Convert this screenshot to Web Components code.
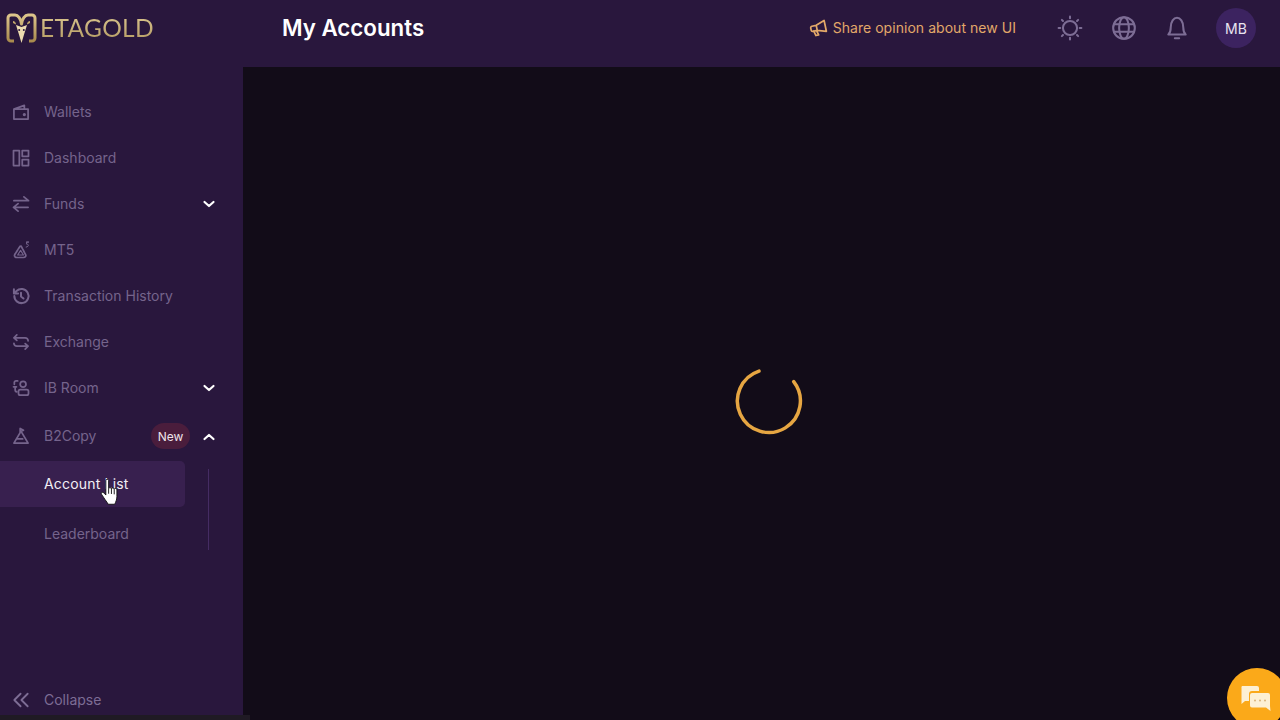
<!DOCTYPE html>
<html lang="en">
<head>
<meta charset="utf-8">
<title>My Accounts</title>
<style>
html, body { margin: 0; height: 100%; background: #120c18; overflow: hidden; }
body { font-family: "Inter", "Noto Sans", sans-serif; }
</style>
</head>
<body>
<app-shell>
	<top-bar slot="top" heading="My Accounts"></top-bar>
	<side-nav slot="side">
		<nav-item icon="wallet">Wallets</nav-item>
		<nav-item icon="dashboard">Dashboard</nav-item>
		<nav-item icon="funds" chevron="down">Funds</nav-item>
		<nav-item icon="mt5">MT5</nav-item>
		<nav-item icon="history">Transaction History</nav-item>
		<nav-item icon="exchange">Exchange</nav-item>
		<nav-item icon="ib" chevron="down">IB Room</nav-item>
		<nav-item icon="copy" chevron="up" badge="New" tall>B2Copy</nav-item>
		<sub-nav>
			<sub-item active>Account List</sub-item>
			<sub-item>Leaderboard</sub-item>
		</sub-nav>
	</side-nav>
	<spin-loader></spin-loader>
</app-shell>
<chat-bubble></chat-bubble>
<hand-cursor></hand-cursor>
<bottom-strip></bottom-strip>

<script>
// stroke icons, all drawn on a 24 box
const ICONS = {
	wallet: '<path d="M3.500 8.500 16 4v4.500M3.500 8.500h17v12h-17z"/><circle cx="16" cy="15" r=".9" fill="currentColor"/>',
	dashboard: '<rect x="3" y="3" width="7" height="18"/><rect x="13.500" y="3" width="7.500" height="7"/><rect x="13.500" y="14" width="7.500" height="7"/>',
	funds: '<path d="M21 8H3.500M15.500 3.500 21 8M3 16h17.500M8.500 11.500 3 16l5.500 4.500"/>',
	mt5: '<path d="M10.500 8 4.500 17.500c-1 2 .5 3.500 2.500 3.500h8c2 0 3.500-1.500 2.500-3.500L12.500 8c-.5-1-1.500-1-2 0z" stroke-dasharray="3.500 1.200"/><path d="M11.500 12.500 8 18h7z" stroke-width="1.400"/><path d="M18.500 2.500h3l-2.800 0v2.500c2.500-.5 3.500 3-.5 3.500" stroke-width="1.200"/>',
	history: '<path d="M4 12a8.500 8.500 0 1 0 2.600-6.100L3.500 9M3.500 4v5h5M12 8v4.500l3 2.500" stroke-width="2.400"/>',
	exchange: '<path d="M7 3.500 3.500 7 7 10M4 7h13a3.500 3.500 0 0 1 3.500 3.500M17 20.500l3.500-3.500-3.500-3M20 17H7a3.500 3.500 0 0 1-3.500-3.500"/>',
	ib: '<circle cx="14.500" cy="7.500" r="3.500"/><rect x="9" y="14" width="12" height="6.500" rx="2"/><path d="M8 3.500H6a2 2 0 0 0-2 2v2M3 10.500h3.500M5 10.500v4a2 2 0 0 0 2 2"/>',
	copy: '<path d="M11 3v5l-7.500 12.500h17L13 8M11 3l4 2-4 2M8 15.500h6"/>',
	chev2: '<path d="M11.500 4.500 4 12l7.500 7.500M20 4.500 12.500 12l7.500 7.500"/>',
	horn: '<g transform="rotate(-12 12 12)"><path d="M21 3.500v14L10 14H4.500a2 2 0 0 1-2-2V9.500a2 2 0 0 1 2-2H10zM10 7.500V14M5.500 14l1.500 6h3.500L9 14" stroke-width="2.200"/></g>',
	sun: '<circle cx="12" cy="12" r="6.500"/><path d="M12 1.500v1.500M12 21v1.500M1.500 12H3M21 12h1.500M4.500 4.500l1 1M18.500 18.500l1 1M4.500 19.500l1-1M18.500 5.500l1-1"/>',
	globe: '<circle cx="12" cy="12" r="10"/><ellipse cx="12" cy="12" rx="4.500" ry="10"/><path d="M2.800 8.500h18.400M2.800 15.500h18.400"/>',
	bell: '<path d="M4 18c1.700-1.500 2.200-3 2.200-6.500C6.200 6 9 2.500 12 2.500s5.800 3.500 5.800 9c0 3.500.5 5 2.200 6.500zM10 21.500h4"/>'
};

const icon = (name, size, sw = 1.9) => `<svg width="${size}" height="${size}" viewBox="0 0 24 24" fill="none" stroke="currentColor" stroke-width="${sw}" stroke-linecap="round" stroke-linejoin="round">${ICONS[name]}</svg>`;

class AppShell extends HTMLElement {
	constructor() {
		super();
		this.attachShadow({ mode: 'open' }).innerHTML = `
		<style>
			:host { display: grid; grid-template-rows: 67px 1fr; height: 720px; background: #120c18; }
			.body { display: grid; grid-template-columns: 243px 1fr; min-height: 0; }
			main { display: flex; align-items: center; justify-content: center; padding: 15px 0 0 15px; }
		</style>
		<slot name="top"></slot>
		<div class="body">
			<slot name="side"></slot>
			<main><slot></slot></main>
		</div>`;
	}
}

class TopBar extends HTMLElement {
	constructor() {
		super();
		this.attachShadow({ mode: 'open' }).innerHTML = `
		<style>
			:host { display: flex; align-items: center; background: #29173d; height: 67px; padding: 0 24px 11px 0; box-sizing: border-box; }
			.logo { width: 282px; padding-left: 6px; box-sizing: border-box; display: flex; align-items: center; gap: 3px; }
			.logo svg { display: block; }
			.word { font: 400 24.500px/30px "Lato", sans-serif; letter-spacing: 0.300px;
				background: linear-gradient(180deg, #dcc791, #b39a62); -webkit-background-clip: text; background-clip: text; color: transparent; }
			h1 { margin: 0; flex: 1; font: 600 22.300px/28px "Inter", sans-serif; color: #fff; }
			.share { display: flex; align-items: center; gap: 5px; color: #e2a869; font-size: 14px; letter-spacing: 0.040px; }
			.share span { padding-bottom: 2px; }
			.share svg { display: block; }
			.tools { display: flex; align-items: center; margin-left: 41px; color: #7d6d95; gap: 27.500px; }
			.tools svg { display: block; }
			.avatar { width: 40px; height: 40px; border-radius: 50%; background: #3c2360; color: #e9e4f0; display: flex; align-items: center; justify-content: center; font-size: 14px; margin-left: -1.500px; }
		</style>
		<div class="logo">
			<svg width="31" height="30" viewBox="0 0 31 30" fill="none">
				<defs><linearGradient id="g" x1="0" y1="0" x2="0" y2="1"><stop offset="0" stop-color="#dcc58b"/><stop offset="1" stop-color="#a98b4e"/></linearGradient></defs>
				<path stroke="url(#g)" stroke-width="3" stroke-linejoin="round" d="M8 28H5a3 3 0 0 1-3-3V5a3 3 0 0 1 3-3h4c3 0 6 4 6.500 9 .5-5 3.500-9 6.500-9h4a3 3 0 0 1 3 3v20a3 3 0 0 1-3 3h-3"/>
				<path fill="#c3a76b" d="M7 8c1.500 0 3 1.500 3 3.500L7 10zM24 8c-1.500 0-3 1.500-3 3.500l3-1.500z"/>
				<path fill="#ecdcb0" d="M10 12l5.500 2 5.500-2-2.500 8-3 10-3-10z"/>
				<circle cx="13.200" cy="17" r="1" fill="#29173d"/><circle cx="17.800" cy="17" r="1" fill="#29173d"/>
			</svg>
			<span class="word">ETAGOLD</span>
		</div>
		<h1>${this.getAttribute('heading')}</h1>
		<div class="share">${icon('horn', 19)}<span>Share opinion about new UI</span></div>
		<div class="tools">
			${icon('sun', 26)}${icon('globe', 26)}${icon('bell', 26)}
			<div class="avatar">MB</div>
		</div>`;
	}
}

class SideNav extends HTMLElement {
	constructor() {
		super();
		this.attachShadow({ mode: 'open' }).innerHTML = `
		<style>
			:host { display: flex; flex-direction: column; background: #29173d; padding-top: 22px; box-sizing: border-box; height: 653px; }
			.list { flex: 1; }
			.collapse { display: flex; align-items: center; gap: 13px; height: 40px; padding-left: 11px; color: #7d6d95; font-size: 14px; }
			.collapse span { padding-bottom: 2px; }
			.foot { height: 40px; }
		</style>
		<div class="list"><slot></slot></div>
		<div class="foot"><div class="collapse">${icon('chev2', 20, 2.2)}<span>Collapse</span></div></div>`;
	}
}

class NavItem extends HTMLElement {
	constructor() {
		super();
		const chev = this.getAttribute('chevron');
		const badge = this.getAttribute('badge');
		const d = chev === 'up' ? 'M2.500 8 7 4l4.500 4' : 'M2.500 4 7 8l4.500-4';
		this.attachShadow({ mode: 'open' }).innerHTML = `
		<style>
			:host { display: flex; align-items: center; height: 46px; padding-left: 11px; padding-right: 27px; color: #75648c; font-size: 14px; box-sizing: border-box; }
			:host([tall]) { height: 50px; }
			.ic { width: 20px; height: 20px; margin-right: 13px; display: flex; }
			.label { flex: 1; padding-bottom: 2px; }
			.badge { width: 39px; height: 26px; border-radius: 13px; background: #4a1d3c; color: #efe4ea; font-size: 12px; display: flex; align-items: center; justify-content: center; margin-right: 12px; }
			.chev { display: block; }
			:host([tall]) .chev { margin-top: 1px; }
		</style>
		<span class="ic">${icon(this.getAttribute('icon'), 20, 2.1)}</span>
		<span class="label"><slot></slot></span>
		${badge ? `<span class="badge">${badge}</span>` : ''}
		${chev ? `<svg class="chev" width="14" height="12" viewBox="0 0 14 12" fill="none" stroke="#fff" stroke-width="2.200" stroke-linecap="round" stroke-linejoin="round"><path d="${d}"/></svg>` : ''}`;
	}
}

class SubNav extends HTMLElement {
	constructor() {
		super();
		this.attachShadow({ mode: 'open' }).innerHTML = `
		<style>
			:host { display: grid; grid-template-columns: 185px 1fr; }
			.items { display: flex; flex-direction: column; gap: 4px; }
			.rail { width: 1px; height: 81px; margin: 8px 0 0 23px; background: #452c63; }
		</style>
		<div class="items"><slot></slot></div>
		<div class="rail"></div>`;
	}
}

class SubItem extends HTMLElement {
	constructor() {
		super();
		this.attachShadow({ mode: 'open' }).innerHTML = `
		<style>
			:host { display: flex; align-items: center; height: 46px; padding: 0 0 1px 44px; box-sizing: border-box; border-radius: 0 5px 5px 0; color: #75648c; font-size: 14px; }
			:host([active]) { background: #38204f; color: #f2eef5; letter-spacing: 0.180px; }
		</style>
		<slot></slot>`;
	}
}

class SpinLoader extends HTMLElement {
	constructor() {
		super();
		this.attachShadow({ mode: 'open' }).innerHTML = `
		<style>:host { display: block; width: 70px; height: 70px; } svg { display: block; }</style>
		<svg width="70" height="70" viewBox="0 0 70 70" fill="none">
			<path d="M25 5.100A31.500 31.500 0 1 0 59.700 15.600" stroke="#e6a642" stroke-width="3.500" stroke-linecap="round"/>
		</svg>`;
	}
}

class ChatBubble extends HTMLElement {
	constructor() {
		super();
		this.attachShadow({ mode: 'open' }).innerHTML = `
		<style>
			:host { position: fixed; left: 1227px; top: 668px; width: 60px; height: 60px; border-radius: 50%; background: #fba919; display: block; }
			svg { position: absolute; left: 13px; top: 17px; }
		</style>
		<svg width="32" height="28" viewBox="0 0 32 28">
			<path fill="#fdf0d4" d="M2 1h15a2 2 0 0 1 2 2v3h-7a3 3 0 0 0-3 3v7H5l-3.500 3V3A2 2 0 0 1 2 1z"/>
			<path fill="#fdf0d4" d="M12 8h16a2 2 0 0 1 2 2v11l.5 5-4.500-3.500H12a2 2 0 0 1-2-2V10a2 2 0 0 1 2-2z"/>
			<g fill="#d9b27a"><circle cx="15" cy="15.500" r="1"/><circle cx="20" cy="15.500" r="1"/><circle cx="25" cy="15.500" r="1"/></g>
		</svg>`;
	}
}

class HandCursor extends HTMLElement {
	constructor() {
		super();
		this.attachShadow({ mode: 'open' }).innerHTML = `
		<style>:host { position: fixed; left: 100px; top: 478px; display: block; width: 21px; height: 28px; } svg { display: block; }</style>
		<svg width="21" height="28" viewBox="0 0 18 24">
			<path fill="#fff" stroke="#111" stroke-width=".8" stroke-linejoin="round" d="M5 2.200c0-1.500 2.400-1.500 2.400 0V9c.2-1 2.300-1 2.400.2.200-1 2.200-1 2.400.3.200-.9 2.200-.8 2.300.5V16c0 3-1.200 4.500-1.800 6.500H7c-1-2-2.500-3.500-4-6-.9-1.500-2.400-3-1.800-3.900.7-1 2.300 0 3.800 2z"/>
			<path stroke="#111" stroke-width=".8" d="M7.400 9v4.500M9.800 9.200v4.500M12.200 9.500V14"/>
		</svg>`;
	}
}

// dark sliver along the bottom of the sidebar
class BottomStrip extends HTMLElement {
	constructor() {
		super();
		this.attachShadow({ mode: 'open' }).innerHTML = `
		<style>:host { position: fixed; left: 0; top: 715px; width: 250px; height: 5px; background: #1f1a24; display: block; }</style>`;
	}
}

customElements.define('app-shell', AppShell);
customElements.define('top-bar', TopBar);
customElements.define('side-nav', SideNav);
customElements.define('nav-item', NavItem);
customElements.define('sub-nav', SubNav);
customElements.define('sub-item', SubItem);
customElements.define('spin-loader', SpinLoader);
customElements.define('chat-bubble', ChatBubble);
customElements.define('hand-cursor', HandCursor);
customElements.define('bottom-strip', BottomStrip);
</script>
</body>
</html>
